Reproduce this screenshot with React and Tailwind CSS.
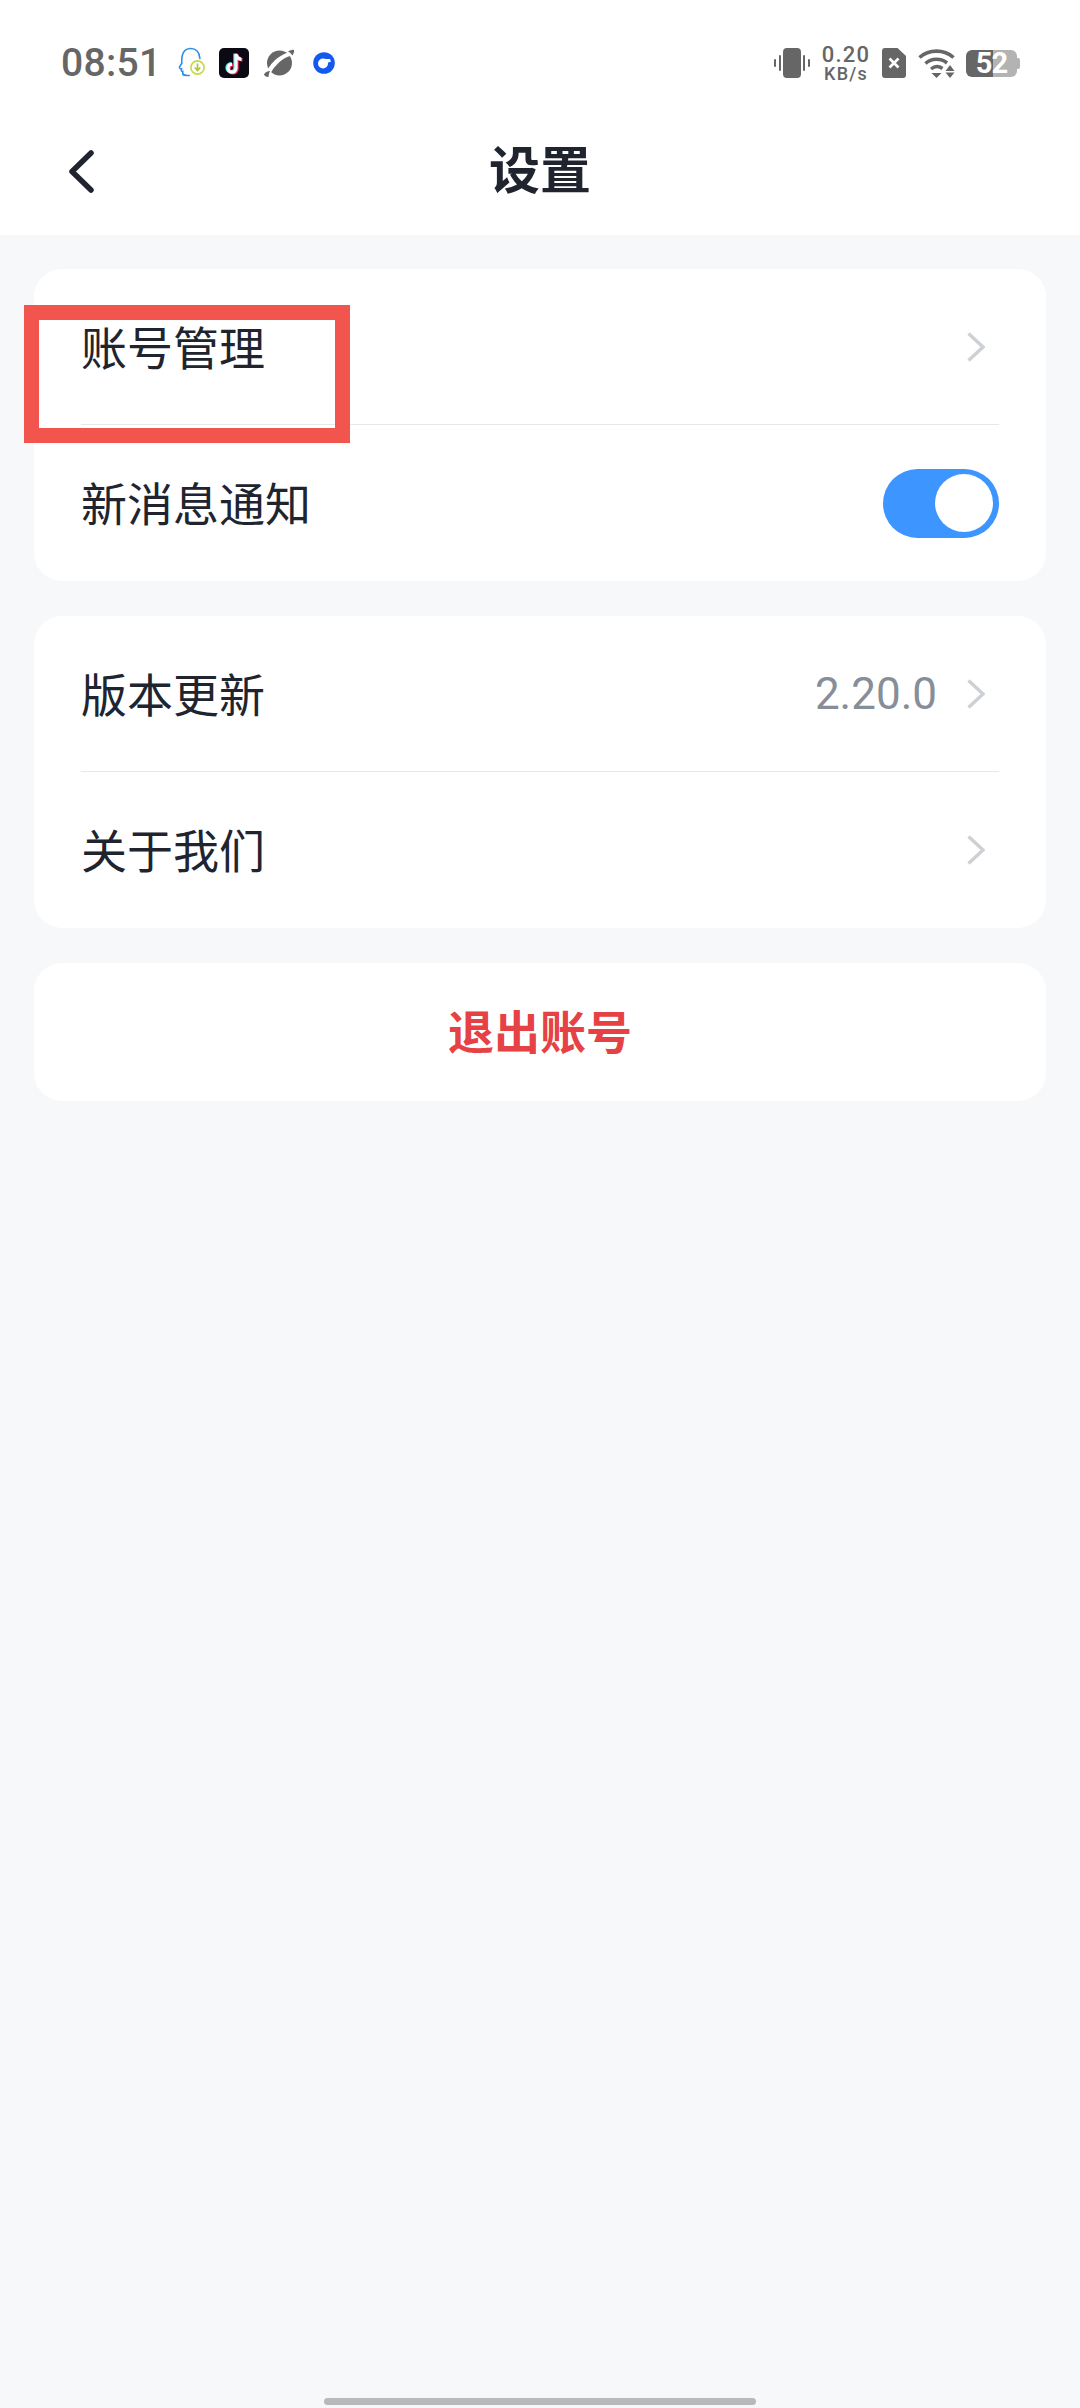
function QQIcon() {
  return (
    <svg width="30" height="32" viewBox="0 0 30 32" fill="none">
      <path d="M10 28.5c-1.5 0-2.5-.6-3-1.5-.4-.9-.2-1.8-.2-2.6-.9 0-1.7-.5-1.5-1.4l.3-1-1.4-.5c-.9-.4-.9-1.1-.5-1.8l2.1-3.5C5.4 9 6.8 2 14 1.5 20 1.2 23.600 5 23.900 11.500" stroke="#2f8fe8" strokeWidth="1.6" strokeLinecap="round" />
      <path d="M7 27.500c2 1 4.200 1.200 6.200 1" stroke="#2f8fe8" strokeWidth="1.6" strokeLinecap="round" />
      <circle cx="21.5" cy="20.5" r="6.6" fill="#fff" stroke="#c6d94a" strokeWidth="1.6" />
      <path d="M21.5 16.500v6M18.800 20.500l2.700 3 2.700-3" stroke="#a8c93c" strokeWidth="1.7" />
    </svg>
  );
}

function TikTokIcon() {
  const note = "M17 6v14.200a4 4 0 1 1-4-4M17 6c.4 3 2.400 5 5.500 5.300";
  return (
    <svg width="30" height="30" viewBox="0 0 30 30" fill="none">
      <rect width="30" height="30" rx="5" fill="#0b0a14" />
      <path d={note} transform="translate(-1 -.5)" stroke="#49e0e6" strokeWidth="3.4" />
      <path d={note} transform="translate(1 .7)" stroke="#f0315b" strokeWidth="3.4" />
      <path d={note} stroke="#fff" strokeWidth="3.2" />
    </svg>
  );
}

function PlanetIcon() {
  return (
    <svg width="30" height="28" viewBox="0 0 30 28">
      <circle cx="15.500" cy="14" r="12.500" fill="#666" />
      <path d="M1.500 25.500C3 20 8 13.500 13 9.500 18.500 5.500 24.500 2.500 28.500 3.500L29.500 6.500C24 6.500 18 10.500 13.500 15 9 19.500 6 24 6 27.500 4 28 2 27.500 1.500 25.500Z" fill="#fff" />
      <path d="M0 25.500c.5 1.700 2.500 2.500 4.500 2.500 0-2 .5-4 1.500-6-2.700 0-5 1.500-6 3.500Z" fill="#666" />
      <path d="M30 1c.3 1.500-.3 3.500-1.500 5.500-1-1.500-2.500-3-4.500-4 2-1 4.700-2 6-1.500Z" fill="#666" />
    </svg>
  );
}

function BlueDotIcon() {
  return (
    <svg width="22" height="22" viewBox="0 0 22 22">
      <circle cx="11" cy="11" r="10.800" fill="#1359f0" />
      <circle cx="10" cy="11.500" r="5" fill="#fff" />
      <path d="M10.500 7h6.500l1 2.500-4 1.500Z" fill="#fff" />
    </svg>
  );
}

function VibrateIcon() {
  return (
    <svg width="36" height="30" viewBox="0 0 36 30" fill="#666">
      <rect x="9" width="18" height="30" rx="4" />
      <rect y="11" width="2" height="8" rx="1" />
      <rect x="5" y="7" width="2" height="16" rx="1" />
      <rect x="29" y="7" width="2" height="16" rx="1" />
      <rect x="34" y="11" width="2" height="8" rx="1" />
    </svg>
  );
}

function SimIcon() {
  return (
    <svg width="24" height="30" viewBox="0 0 24 30">
      <path d="M3 0h12.500L24 8v19a3 3 0 0 1-3 3H3a3 3 0 0 1-3-3V3a3 3 0 0 1 3-3Z" fill="#666" />
      <path d="M7.500 10.500l9 9M16.500 10.500l-9 9" stroke="#fff" strokeWidth="2.600" />
    </svg>
  );
}

function WifiIcon() {
  return (
    <svg width="38" height="30" viewBox="0 0 38 30" fill="none">
      <path d="M1.500 9.500C11 1 26 1 35.500 9.500" stroke="#666" strokeWidth="3.600" />
      <path d="M7.500 15.500C13.500 10 23 10 29 15" stroke="#666" strokeWidth="3.600" />
      <path d="M13 21c3.500-3 8-3 11.500-.5" stroke="#666" strokeWidth="3.400" />
      <path d="M13.500 25h10L18.500 30Z" fill="#666" />
      <path d="M32 17l4.500 6h-9ZM27.500 24.500h9L32 30Z" fill="#666" />
    </svg>
  );
}

function Battery() {
  return (
    <div className="flex items-center">
      <div className="relative flex h-[27px] w-[51px]">
        <div className="w-[27px] rounded-l-[6px] bg-[#666666]" />
        <div className="flex-1 rounded-r-[6px] bg-[#b3b3b3]" />
        <span className="absolute inset-0 flex items-center justify-center text-[29px] leading-none font-bold tracking-[-1px] text-white">52</span>
      </div>
      <div className="h-[11px] w-[3px] rounded-r-[2px] bg-[#b3b3b3]" />
    </div>
  );
}

function Chevron() {
  return (
    <svg width="18" height="30" viewBox="0 0 18 30" fill="none" stroke="#cdd0d4" strokeWidth="3.400">
      <path d="M1.500 1.500 16 15 1.500 28.500" />
    </svg>
  );
}

function StatusBar() {
  return (
    <div className="flex h-[126px] items-center justify-between pr-[60px] pl-[61px] font-['Roboto',sans-serif] text-[#666666]">
      <div className="flex items-center">
        <span className="w-[115px] text-[39px] leading-none font-medium tracking-[0.3px]">08:51</span>
        <div className="flex items-center">
          <QQIcon />
          <div className="ml-[13px]"><TikTokIcon /></div>
          <div className="ml-[15px]"><PlanetIcon /></div>
          <div className="ml-[19px]"><BlueDotIcon /></div>
        </div>
      </div>
      <div className="flex items-center">
        <VibrateIcon />
        <div className="ml-[12px] flex w-[48px] flex-col items-center font-medium">
          <span className="text-[22px] leading-[21px] tracking-[1.2px]">0.20</span>
          <span className="text-[18px] leading-[17px] tracking-[1.2px]">KB/s</span>
        </div>
        <div className="ml-[12px]"><SimIcon /></div>
        <div className="ml-[12px]"><WifiIcon /></div>
        <div className="ml-[10px]"><Battery /></div>
      </div>
    </div>
  );
}

function Row({ label, value, toggle, last }) {
  return (
    <div className={`flex h-[156px] items-center justify-between ${last ? "" : "border-b-[1.5px] border-[#e6e8ec]"}`}>
      <span className="pt-[4px] text-[46px] leading-none text-[#20242e]">{label}</span>
      {toggle ? (
        <div className="flex h-[69px] w-[116px] items-center justify-end rounded-full bg-[#3d96ff] pr-[6px]">
          <div className="h-[58px] w-[58px] rounded-full bg-white" />
        </div>
      ) : (
        <div className="flex items-center pr-[14px]">
          {value && <span className="mr-[30px] font-['Roboto',sans-serif] text-[44px] leading-none text-[#868e99]">{value}</span>}
          <Chevron />
        </div>
      )}
    </div>
  );
}

export default function App() {
  return (
    <div className="relative flex h-[2408px] w-[1080px] flex-col overflow-hidden bg-[#f7f8fa] font-['Liberation_Sans','Noto_Sans_CJK_SC',sans-serif]">
      <header className="h-[235px] bg-white">
        <StatusBar />
        <div className="relative flex h-[90px] items-center justify-center">
          <svg width="25" height="43" viewBox="0 0 25 43" fill="none" stroke="#20242e" strokeWidth="5.500" strokeLinecap="round" strokeLinejoin="round" className="absolute left-[69px]">
            <path d="M22 3 3 21.500 22 40" />
          </svg>
          <h1 className="text-[51px] leading-none font-bold text-[#20242e]">设置</h1>
        </div>
      </header>

      <main className="flex flex-col gap-[35px] px-[34px] pt-[34px]">
        <section className="rounded-[28px] bg-white px-[47px]">
          <Row label="账号管理" />
          <Row label="新消息通知" toggle last />
        </section>
        <section className="rounded-[28px] bg-white px-[47px]">
          <Row label="版本更新" value="2.20.0" />
          <Row label="关于我们" last />
        </section>
        <section className="flex h-[138px] items-center justify-center rounded-[28px] bg-white">
          <span className="pt-[2px] text-[46px] leading-none font-bold text-[#e64245]">退出账号</span>
        </section>
      </main>

      {/* annotation box drawn over the first row */}
      <div className="absolute top-[305px] left-[24px] h-[138px] w-[326px] border-[15px] border-[#f2554e]" />

      <div className="mt-auto mb-[3px] h-[7px] w-[432px] self-center rounded-full bg-[#b9b9b9]" />
    </div>
  );
}
